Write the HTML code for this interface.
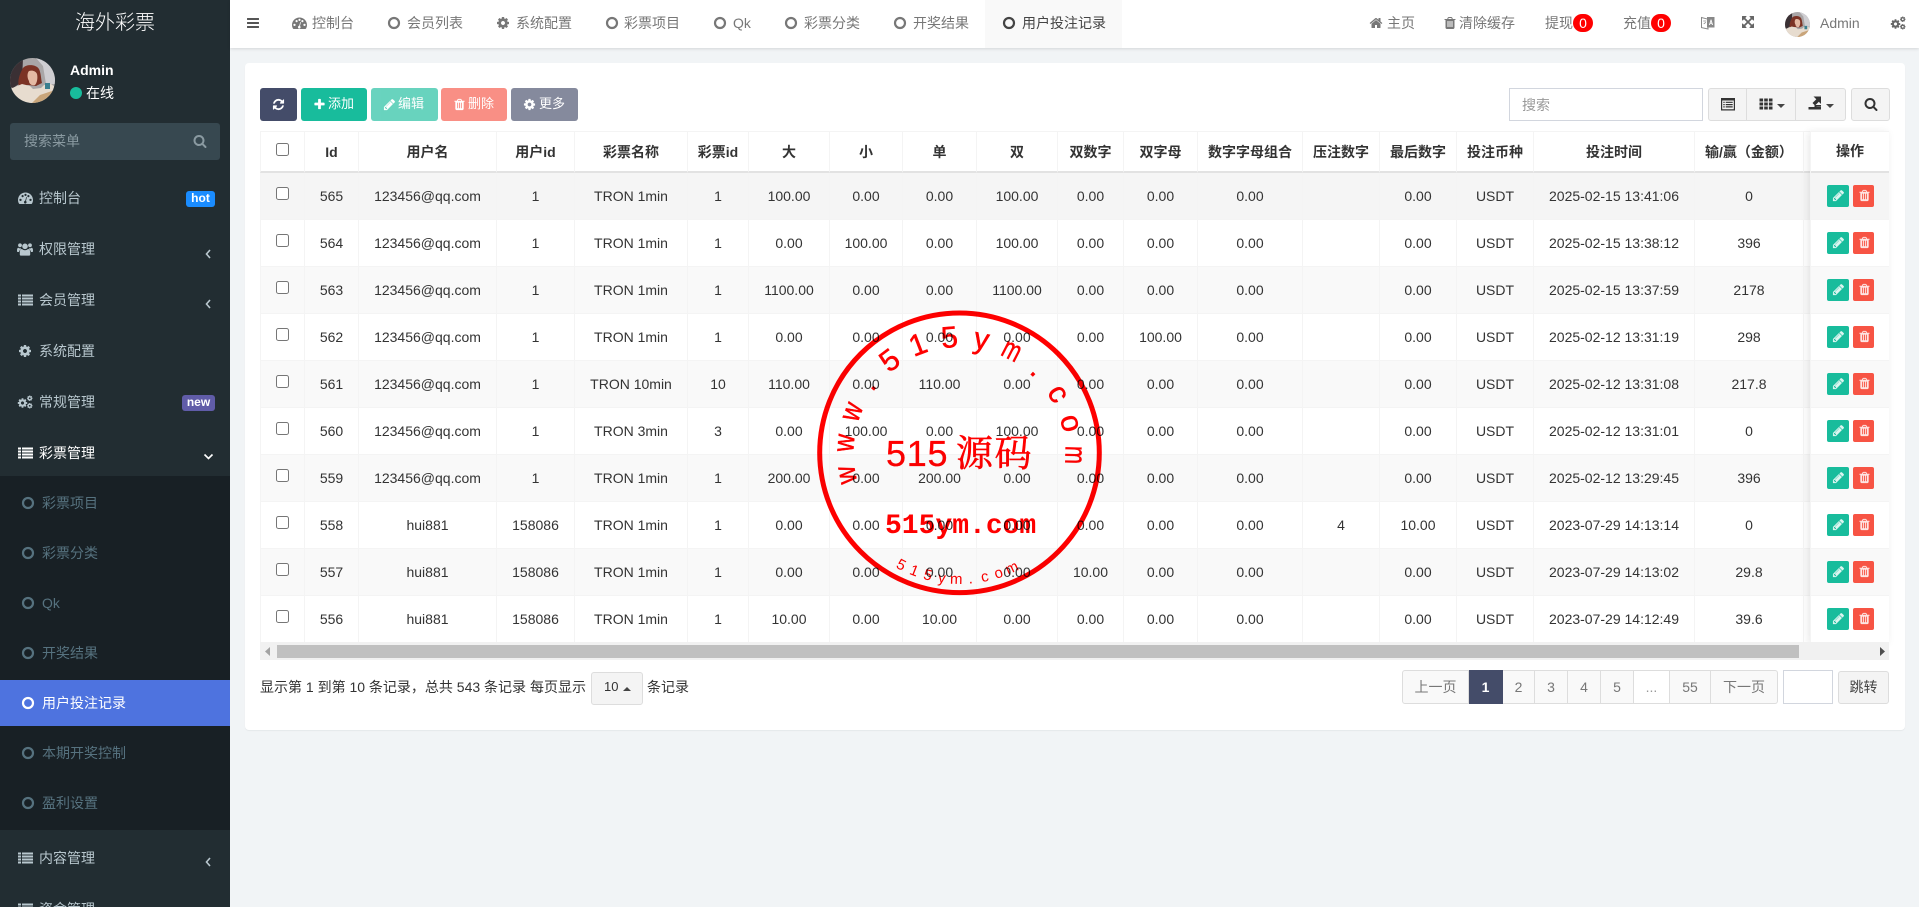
<!DOCTYPE html>
<html lang="zh-CN"><head><meta charset="utf-8"><title>用户投注记录</title>
<style>
*{box-sizing:border-box}
html,body{margin:0;padding:0;width:1919px;height:907px;overflow:hidden;background:#f1f4f6;font-family:"Liberation Sans","Noto Sans CJK SC",sans-serif;font-size:14px;color:#333}
.a{position:absolute}
.t{position:absolute;line-height:20px;white-space:nowrap}
svg.i{position:absolute;width:14px;height:14px;fill:currentColor;display:block}
svg.av{position:absolute;border-radius:50%;overflow:hidden}
#side{position:absolute;left:0;top:0;width:230px;height:907px;background:#222d32;overflow:hidden;color:#b8c7ce}
#sub{position:absolute;left:0;top:476px;width:230px;height:354px;background:#182025}
#act{position:absolute;left:0;top:680px;width:230px;height:46px;background:#4e73df}
.s{color:#56727f}
#top{position:absolute;left:230px;top:0;width:1689px;height:48px;background:#fff;box-shadow:0 1px 3px rgba(0,0,0,.12)}
#nav{position:absolute;left:0;top:0;width:1919px;height:48px;color:#777}
#panel{position:absolute;left:245px;top:63px;width:1660px;height:667px;background:#fff;border-radius:4px;box-shadow:0 1px 1px rgba(0,0,0,.05)}
.b{position:absolute;top:88px;height:33px;border-radius:3px;color:#fff;line-height:33px}
.b .t{font-size:13px}
.b svg.i{width:13px;height:13px}
table{position:absolute;left:260px;top:131px;width:1629px;table-layout:fixed;border-collapse:separate;border-spacing:0;font-size:14px;color:#333}
th,td{border-right:1px solid #f4f4f4;border-bottom:1px solid #f4f4f4;text-align:center;padding:0;white-space:nowrap;overflow:hidden}
th{height:42px;border-top:1px solid #f4f4f4;border-bottom:2px solid #e2e2e2;font-weight:700;background:#fff}
td{height:47px}
th:first-child,td:first-child{border-left:1px solid #f4f4f4}
tr.o td{background:#f9f9f9}
tr.h td{background:#f5f5f5}
input[type=checkbox]{margin:0;width:13px;height:13px;position:relative;top:-1px;left:0}
#fix{position:absolute;left:1810px;top:131px;width:79px;height:512px;background:#fff;box-shadow:-2px 1px 8px rgba(0,0,0,.09);border-left:1px solid #f4f4f4}
#fix .hd{height:42px;border-top:1px solid #f4f4f4;border-bottom:2px solid #e2e2e2;text-align:center;line-height:39px;font-weight:700}
#fix .r{position:relative;height:47px;border-bottom:1px solid #f4f4f4}
#fix .r.o{background:#f9f9f9}#fix .r.h{background:#f5f5f5}
.e,.d{position:absolute;top:12px;height:22px;border-radius:2px;color:#fff}
.e{left:16px;width:22px;background:#18bc9c}
.d{left:42px;width:21px;background:#f75444}
.e svg,.d svg{left:5px;top:4px;width:13px;height:13px;opacity:.85}
.p{position:absolute;top:670px;height:34px;border:1px solid #ddd;border-left:0;background:#f9f9f9;color:#777;text-align:center;line-height:32px}
.bd{position:absolute;top:14px;width:20px;height:18px;border-radius:9px;background:#f00;color:#fff;text-align:center;line-height:18px}
.g{position:absolute;top:88px;height:33px;background:#f4f4f4;border:1px solid #ddd;color:#333}
.car{position:absolute;width:0;height:0;border-left:4px solid transparent;border-right:4px solid transparent;border-top:4px solid #444}
#stamp{position:absolute;left:800px;top:293px;width:320px;height:320px;mix-blend-mode:multiply;overflow:visible}
</style></head><body>
<svg width="0" height="0" style="position:absolute"><defs>
<symbol id="bars" viewBox="0 0 1792 1792"><path d="M1664 1344v128q0 26-19 45t-45 19h-1408q-26 0-45-19t-19-45v-128q0-26 19-45t45-19h1408q26 0 45 19t19 45zm0-512v128q0 26-19 45t-45 19h-1408q-26 0-45-19t-19-45v-128q0-26 19-45t45-19h1408q26 0 45 19t19 45zm0-512v128q0 26-19 45t-45 19h-1408q-26 0-45-19t-19-45v-128q0-26 19-45t45-19h1408q26 0 45 19t19 45z"/></symbol>
<symbol id="plus" viewBox="0 0 1792 1792"><path d="M1600 736v192q0 40-28 68t-68 28h-416v416q0 40-28 68t-68 28h-192q-40 0-68-28t-28-68v-416h-416q-40 0-68-28t-28-68v-192q0-40 28-68t68-28h416v-416q0-40 28-68t68-28h192q40 0 68 28t28 68v416h416q40 0 68 28t28 68z"/></symbol>
<symbol id="search" viewBox="0 0 1792 1792"><path d="M1216 832q0-185-131.500-316.500t-316.500-131.500-316.500 131.500-131.500 316.500 131.500 316.500 316.500 131.500 316.500-131.500 131.500-316.500zm512 832q0 52-38 90t-90 38q-54 0-90-38l-343-342q-179 124-399 124-143 0-273.500-55.500t-225-150-150-225-55.500-273.500 55.500-273.500 150-225 225-150 273.500-55.500 273.500 55.500 225 150 150 225 55.500 273.500q0 220-124 399l343 343q37 37 37 90z"/></symbol>
<symbol id="ring" viewBox="0 0 14 14"><circle cx="7" cy="7" r="5" fill="none" stroke="currentColor" stroke-width="2.2"/></symbol>
<symbol id="trash" viewBox="0 0 1792 1792"><path d="M704 1376v-704q0-14-9-23t-23-9h-64q-14 0-23 9t-9 23v704q0 14 9 23t23 9h64q14 0 23-9t9-23zm256 0v-704q0-14-9-23t-23-9h-64q-14 0-23 9t-9 23v704q0 14 9 23t23 9h64q14 0 23-9t9-23zm256 0v-704q0-14-9-23t-23-9h-64q-14 0-23 9t-9 23v704q0 14 9 23t23 9h64q14 0 23-9t9-23zm-544-992h448l-48-117q-7-9-17-11h-317q-10 2-17 11zm928 32v64q0 14-9 23t-23 9h-96v948q0 83-47 143.500t-113 60.500h-832q-66 0-113-58.500t-47-141.500v-952h-96q-14 0-23-9t-9-23v-64q0-14 9-23t23-9h309l70-167q15-37 54-63t79-26h320q40 0 79 26t54 63l70 167h309q14 0 23 9t9 23z"/></symbol>
<symbol id="pencil" viewBox="0 0 1792 1792"><path d="M491 1536l91-91-235-235-91 91v107h128v128h107zm523-928q0-22-22-22-10 0-17 7l-542 542q-7 7-7 17 0 22 22 22 10 0 17-7l542-542q7-7 7-17zm-54-192l416 416-832 832h-416v-416zm683 96q0 53-37 90l-166 166-416-416 166-165q36-38 90-38 53 0 91 38l235 234q37 39 37 91z"/></symbol>
<symbol id="home" viewBox="0 0 1792 1792"><path d="M1472 992v480q0 26-19 45t-45 19h-384v-384h-256v384h-384q-26 0-45-19t-19-45v-480q0-1 .5-3t.5-3l575-474 575 474q1 2 1 6zm223-69l-62 74q-8 9-21 11h-3q-13 0-21-7l-692-577-692 577q-12 8-24 7-13-2-21-11l-62-74q-8-10-7-23.500t11-21.500l719-599q32-26 76-26t76 26l244 204v-195q0-14 9-23t23-9h192q14 0 23 9t9 23v408l219 182q10 8 11 21.500t-7 23.500z"/></symbol>
<symbol id="cog" viewBox="0 0 1792 1792"><path d="M1152 896q0-106-75-181t-181-75-181 75-75 181 75 181 181 75 181-75 75-181zm512-109v222q0 12-8 23t-20 13l-185 28q-19 54-39 91 35 50 107 138 10 12 10 25t-9 23q-27 37-99 108t-94 71q-12 0-26-9l-138-108q-44 23-91 38-16 136-29 186-7 28-36 28h-222q-14 0-24.500-8.500t-11.500-21.500l-28-184q-49-16-90-37l-141 107q-10 9-25 9-14 0-25-11-126-114-165-168-7-10-7-23 0-12 8-23 15-21 51-66.500t54-70.500q-27-50-41-99l-183-27q-13-2-21-12.500t-8-23.500v-222q0-12 8-23t19-13l186-28q14-46 39-92-40-57-107-138-10-12-10-24 0-10 9-23 26-36 98.500-107.500t94.500-71.500q13 0 26 10l138 107q44-23 91-38 16-136 29-186 7-28 36-28h222q14 0 24.500 8.500t11.500 21.500l28 184q49 16 90 37l142-107q9-9 24-9 13 0 25 10 129 119 165 170 7 8 7 22 0 12-8 23-15 21-51 66.500t-54 70.500q26 50 41 98l183 28q13 2 21 12.500t8 23.500z"/></symbol>
<symbol id="cogs" viewBox="0 0 16 14"><svg x="0" y="2.500" width="11" height="11" viewBox="0 0 1792 1792"><use href="#cog" width="1792" height="1792"/></svg><svg x="9.500" y="0" width="6.500" height="6.500" viewBox="0 0 1792 1792"><use href="#cog" width="1792" height="1792"/></svg><svg x="9.500" y="7.500" width="6.500" height="6.500" viewBox="0 0 1792 1792"><use href="#cog" width="1792" height="1792"/></svg></symbol>
<symbol id="refresh" viewBox="0 0 1792 1792"><path d="M1639 1056q0 5-1 7-64 268-268 434.500t-478 166.500q-146 0-282.500-55t-243.500-157l-129 129q-19 19-45 19t-45-19-19-45v-448q0-26 19-45t45-19h448q26 0 45 19t19 45-19 45l-137 137q71 66 161 102t187 36q134 0 250-65t186-179q11-17 53-117 8-23 30-23h192q13 0 22.500 9.500t9.500 22.500zm25-800v448q0 26-19 45t-45 19h-448q-26 0-45-19t-19-45 19-45l138-138q-148-137-349-137-134 0-250 65t-186 179q-11 17-53 117-8 23-30 23h-199q-13 0-22.500-9.500t-9.500-22.500v-7q65-268 270-434.500t480-166.500q146 0 284 55.500t245 156.500l130-129q19-19 45-19t45 19 19 45z"/></symbol>
<symbol id="list" viewBox="0 0 15 14"><path d="M0 2h3v2H0zM4 2h11v2H4zM0 5h3v2H0zM4 5h11v2H4zM0 8h3v2H0zM4 8h11v2H4zM0 11h3v2H0zM4 11h11v2H4z" transform="translate(0 -.5)"/></symbol>
<symbol id="dash" viewBox="0 0 15 14"><path fill-rule="evenodd" d="M7.500 1.500C3.400 1.500 0 4.800 0 9c0 1.400.4 2.600 1 3.600.2.300.4.400.7.400h11.600c.3 0 .5-.1.700-.4.600-1 1-2.200 1-3.600 0-4.200-3.400-7.500-7.500-7.500zM2.500 7.700a1.100 1.100 0 1 1 0 2.300 1.100 1.100 0 0 1 0-2.300zM4.600 4a1.100 1.100 0 1 1 0 2.200 1.100 1.100 0 0 1 0-2.200zM7.500 2.800a1.100 1.100 0 1 1 0 2.200 1.100 1.100 0 0 1 0-2.200zM10.400 4a1.100 1.100 0 1 1 0 2.200 1.100 1.100 0 0 1 0-2.200zM12.500 7.700a1.100 1.100 0 1 1 0 2.300 1.100 1.100 0 0 1 0-2.300zM8.300 5.900l.6.300-.9 3.800c.4.300.6.700.6 1.200 0 .8-.7 1.400-1.400 1.400S6 12 6 11.200c0-.7.500-1.300 1.200-1.400z"/></symbol>
<symbol id="users" viewBox="0 0 16 14"><circle cx="8" cy="4.300" r="2.800"/><circle cx="3" cy="3.300" r="1.900"/><circle cx="13" cy="3.300" r="1.900"/><path d="M3.800 13.600c-.6 0-1-.4-1-1V10c0-1.800 1-3 2.300-3 .5.600 1.500 1.300 2.900 1.300S10.400 7.600 10.900 7c1.300 0 2.300 1.200 2.300 3v2.600c0 .6-.4 1-1 1zM0 8.200C0 6.600.6 5.700 1.500 5.700c.4.400 1 .7 1.700.7.300 0 .5 0 .8-.1-.1.500 0 .8.100.9C3 7.600 2.100 8.700 2 10H.7C.3 10 0 9.700 0 9.300zM16 8.200c0-1.600-.6-2.500-1.500-2.500-.4.400-1 .7-1.700.7-.3 0-.5 0-.8-.1.100.5 0 .8-.1.900 1.100.4 2 1.500 2.100 2.800h1.300c.4 0 .7-.3.7-.7z"/></symbol>
<symbol id="arrows" viewBox="0 0 1792 1792"><path d="M1283 413l-355 355 355 355 144-144q29-31 70-14 39 17 39 59v448q0 26-19 45t-45 19h-448q-42 0-59-40-17-39 14-69l144-144-355-355-355 355 144 144q31 30 14 69-17 40-59 40h-448q-26 0-45-19t-19-45v-448q0-42 40-59 39-17 69 14l144 144 355-355-355-355-144 144q-19 19-45 19-12 0-24-5-40-17-40-59v-448q0-26 19-45t45-19h448q42 0 59 40 17 39-14 69l-144 144 355 355 355-355-144-144q-31-30-14-69 17-40 59-40h448q26 0 45 19t19 45v448q0 42-39 59-13 5-25 5-26 0-45-19z"/></symbol>
<symbol id="lang" viewBox="0 0 14 14"><path d="M.5 1.500 7 3.200V13L.5 11.600z" fill="none" stroke="currentColor" stroke-width="1"/><path d="M6 1h7.500v10.500H6z" fill="currentColor"/><path d="M8 9l1.700-5.500h.7L12 9h-1l-.4-1.300H9.300L9 9zM9.600 6.800h.8l-.4-1.500z" fill="#fff"/><path d="M2.200 4.600h3v.8h-3zM2.500 7.500 4.700 6l.4.600L2.900 8.200z" fill="currentColor"/></symbol>
<symbol id="listalt" viewBox="0 0 14 14"><path fill-rule="evenodd" d="M0 1h14v12.500H0zM1.200 3.500v8.800h11.600V3.500z"/><path d="M2.300 4.700h1.400v1.200H2.300zM4.700 4.700h7v1.200h-7zM2.300 7h1.400v1.200H2.300zM4.700 7h7v1.200h-7zM2.300 9.300h1.400v1.200H2.300zM4.700 9.300h7v1.200h-7z"/></symbol>
<symbol id="th" viewBox="0 0 14 14"><path d="M.5 1.500h3.600v3H.5zM5.200 1.500h3.600v3H5.200zM9.900 1.500h3.600v3H9.900zM.5 5.500h3.600v3H.5zM5.200 5.500h3.600v3H5.200zM9.900 5.500h3.600v3H9.900zM.5 9.500h3.600v3H.5zM5.200 9.500h3.600v3H5.200zM9.900 9.500h3.600v3H9.900z"/></symbol>
<symbol id="export" viewBox="0 0 14 14"><path d="M.5 9h12.500v1H8.500v.2H13V13.500H.5V11h6V9z"/><path d="M5.500.5H13V8L10.800 5.800 7 9.500 4.500 7 8.300 3.200z"/></symbol>
<symbol id="ava" viewBox="0 0 45 45"><rect width="45" height="45" fill="#a9a6a7"/><path d="M26 0h19v26H36L33 8z" fill="#cfced2"/><path d="M0 0h13l-1 24-9 6-3-1z" fill="#3a3034"/><path d="M13 10c3-4 13-4 16 1 2 4 2 10 3 14l-6 3-8-1-9 2c-2-6 1-14 4-19z" fill="#7c3325"/><path d="M19 13c3-1 7 0 8 3 1 4 0 9-2 11-3 1-6-1-6-4-2-3-2-8 0-10z" fill="#e4b9a3"/><path d="M0 31l12-5 8 2 3 3 8-1 3-3 7-1 4 3v16H0z" fill="#e7dccf"/><path d="M22 45l8-8 15-5v13z" fill="#c9a57a"/><path d="M35 25h5v6h-5z" fill="#3a7f8f"/></symbol>
</defs></svg>

<div id="side">
<div id="sub"></div><div id="act"></div>
<div class="t" style="left:0;width:230px;text-align:center;top:9px;font-size:20px;line-height:28px;color:#fff;font-weight:300">海外彩票</div>
<svg class="av" style="left:10px;top:58px;width:45px;height:45px"><use href="#ava"/></svg>
<div class="t" style="left:70px;top:60px;color:#fff;font-weight:700">Admin</div>
<div class="a" style="left:70px;top:87px;width:12px;height:12px;border-radius:50%;background:#18bc9c"></div>
<div class="t" style="left:86px;top:83px;color:#fff">在线</div>
<div class="a" style="left:10px;top:123px;width:210px;height:37px;border-radius:3px;background:#374850"></div>
<div class="t" style="left:24px;top:131px;color:#8a9aa1">搜索菜单</div>
<svg class="i" style="left:193px;top:134px;color:#8a9aa1"><use href="#search"/></svg>

<svg class="i" style="left:18px;top:191px;width:15px"><use href="#dash"/></svg><div class="t" style="left:39px;top:188px">控制台</div>
<div class="a" style="left:186px;top:191px;width:29px;height:16px;border-radius:3px;background:#1a8cff;color:#fff;font-size:12px;font-weight:700;text-align:center;line-height:15px">hot</div>
<svg class="i" style="left:17px;top:242px;width:16px"><use href="#users"/></svg><div class="t" style="left:39px;top:239px">权限管理</div>
<svg class="i" style="left:18px;top:293px;width:15px"><use href="#list"/></svg><div class="t" style="left:39px;top:290px">会员管理</div>
<svg class="i" style="left:18px;top:344px"><use href="#cog"/></svg><div class="t" style="left:39px;top:341px">系统配置</div>
<svg class="i" style="left:17px;top:395px;width:16px"><use href="#cogs"/></svg><div class="t" style="left:39px;top:392px">常规管理</div>
<div class="a" style="left:182px;top:395px;width:33px;height:16px;border-radius:3px;background:#605ca8;color:#fff;font-size:12px;font-weight:700;text-align:center;line-height:15px">new</div>
<svg class="i" style="left:18px;top:446px;width:15px;color:#fff"><use href="#list"/></svg><div class="t" style="left:39px;top:443px;color:#fff">彩票管理</div>

<svg class="i s" style="left:21px;top:496px"><use href="#ring"/></svg><div class="t s" style="left:42px;top:493px">彩票项目</div>
<svg class="i s" style="left:21px;top:546px"><use href="#ring"/></svg><div class="t s" style="left:42px;top:543px">彩票分类</div>
<svg class="i s" style="left:21px;top:596px"><use href="#ring"/></svg><div class="t s" style="left:42px;top:593px">Qk</div>
<svg class="i s" style="left:21px;top:646px"><use href="#ring"/></svg><div class="t s" style="left:42px;top:643px">开奖结果</div>
<svg class="i" style="left:21px;top:696px;color:#fff"><use href="#ring"/></svg><div class="t" style="left:42px;top:693px;color:#fff">用户投注记录</div>
<svg class="i s" style="left:21px;top:746px"><use href="#ring"/></svg><div class="t s" style="left:42px;top:743px">本期开奖控制</div>
<svg class="i s" style="left:21px;top:796px"><use href="#ring"/></svg><div class="t s" style="left:42px;top:793px">盈利设置</div>

<svg class="i" style="left:18px;top:851px;width:15px"><use href="#list"/></svg><div class="t" style="left:39px;top:848px">内容管理</div>
<svg class="i" style="left:18px;top:902px;width:15px"><use href="#list"/></svg><div class="t" style="left:39px;top:899px">资金管理</div>

<svg class="a" style="left:204px;top:248px;width:8px;height:12px" viewBox="0 0 8 12"><path d="M6 2 2.500 6 6 10" fill="none" stroke="#b8c7ce" stroke-width="1.600"/></svg>
<svg class="a" style="left:204px;top:298px;width:8px;height:12px" viewBox="0 0 8 12"><path d="M6 2 2.500 6 6 10" fill="none" stroke="#b8c7ce" stroke-width="1.600"/></svg>
<svg class="a" style="left:204px;top:856px;width:8px;height:12px" viewBox="0 0 8 12"><path d="M6 2 2.500 6 6 10" fill="none" stroke="#b8c7ce" stroke-width="1.600"/></svg>
<svg class="a" style="left:203px;top:452px;width:11px;height:9px" viewBox="0 0 11 9"><path d="M1.500 2.500 5.500 6.500 9.500 2.500" fill="none" stroke="#fff" stroke-width="1.600"/></svg>
</div>

<div id="top"></div>
<div id="nav">
<svg class="i" style="left:246px;top:16px;color:#555"><use href="#bars"/></svg>
<svg class="i" style="left:292px;top:16px;width:15px"><use href="#dash"/></svg><div class="t" style="left:312px;top:13px">控制台</div>
<svg class="i" style="left:387px;top:16px"><use href="#ring"/></svg><div class="t" style="left:407px;top:13px">会员列表</div>
<svg class="i" style="left:496px;top:16px"><use href="#cog"/></svg><div class="t" style="left:516px;top:13px">系统配置</div>
<svg class="i" style="left:605px;top:16px"><use href="#ring"/></svg><div class="t" style="left:624px;top:13px">彩票项目</div>
<svg class="i" style="left:713px;top:16px"><use href="#ring"/></svg><div class="t" style="left:733px;top:13px">Qk</div>
<svg class="i" style="left:784px;top:16px"><use href="#ring"/></svg><div class="t" style="left:804px;top:13px">彩票分类</div>
<svg class="i" style="left:893px;top:16px"><use href="#ring"/></svg><div class="t" style="left:913px;top:13px">开奖结果</div>
<div class="a" style="left:985px;top:0;width:137px;height:48px;background:#f9f9f9"></div>
<svg class="i" style="left:1002px;top:16px;color:#444"><use href="#ring"/></svg><div class="t" style="left:1022px;top:13px;color:#444">用户投注记录</div>
<svg class="i" style="left:1369px;top:16px"><use href="#home"/></svg><div class="t" style="left:1387px;top:13px">主页</div>
<svg class="i" style="left:1443px;top:16px"><use href="#trash"/></svg><div class="t" style="left:1459px;top:13px">清除缓存</div>
<div class="t" style="left:1545px;top:13px">提现</div><div class="bd" style="left:1573px">0</div>
<div class="t" style="left:1623px;top:13px">充值</div><div class="bd" style="left:1651px">0</div>
<svg class="i" style="left:1701px;top:16px;color:#888"><use href="#lang"/></svg>
<svg class="i" style="left:1742px;top:16px;color:#666"><use href="#arrows"/></svg>
<svg class="av" style="left:1785px;top:12px;width:25px;height:25px"><use href="#ava"/></svg>
<div class="t" style="left:1820px;top:13px">Admin</div>
<svg class="i" style="left:1890px;top:16px;width:16px;color:#666"><use href="#cogs"/></svg>
</div>

<div id="panel"></div>
<div class="b" style="left:260px;width:37px;background:#444c69"><svg class="i" style="left:12px;top:10px"><use href="#refresh"/></svg></div>
<div class="b" style="left:301px;width:66px;background:#18bc9c"><svg class="i" style="left:12px;top:10px"><use href="#plus"/></svg><span class="t" style="left:27px;top:6px">添加</span></div>
<div class="b" style="left:371px;width:67px;background:#18bc9c;opacity:.65"><svg class="i" style="left:12px;top:10px"><use href="#pencil"/></svg><span class="t" style="left:27px;top:6px">编辑</span></div>
<div class="b" style="left:441px;width:66px;background:#f75444;opacity:.65"><svg class="i" style="left:12px;top:10px"><use href="#trash"/></svg><span class="t" style="left:27px;top:6px">删除</span></div>
<div class="b" style="left:511px;width:67px;background:#444c69;opacity:.65"><svg class="i" style="left:12px;top:10px"><use href="#cog"/></svg><span class="t" style="left:28px;top:6px">更多</span></div>

<div class="a" style="left:1509px;top:88px;width:194px;height:33px;border:1px solid #d2d6de;background:#fff"></div>
<div class="t" style="left:1522px;top:95px;color:#999">搜索</div>
<div class="g" style="left:1708px;width:39px;border-radius:3px 0 0 3px"><svg class="i" style="left:12px;top:8px"><use href="#listalt"/></svg></div>
<div class="g" style="left:1746px;width:50px"><svg class="i" style="left:12px;top:8px"><use href="#th"/></svg><div class="car" style="left:30px;top:15px"></div></div>
<div class="g" style="left:1795px;width:51px;border-radius:0 3px 3px 0"><svg class="i" style="left:12px;top:7px"><use href="#export"/></svg><div class="car" style="left:30px;top:15px"></div></div>
<div class="g" style="left:1851px;width:39px;border-radius:3px"><svg class="i" style="left:12px;top:8px"><use href="#search"/></svg></div>

<table><colgroup><col style="width:45px"><col style="width:54px"><col style="width:138px"><col style="width:78px"><col style="width:113px"><col style="width:61px"><col style="width:81px"><col style="width:73px"><col style="width:74px"><col style="width:81px"><col style="width:66px"><col style="width:74px"><col style="width:105px"><col style="width:77px"><col style="width:77px"><col style="width:77px"><col style="width:161px"><col style="width:109px"><col style="width:85px"></colgroup>
<thead><tr><th><input type="checkbox"></th><th>Id</th><th>用户名</th><th>用户id</th><th>彩票名称</th><th>彩票id</th><th>大</th><th>小</th><th>单</th><th>双</th><th>双数字</th><th>双字母</th><th>数字字母组合</th><th>压注数字</th><th>最后数字</th><th>投注币种</th><th>投注时间</th><th>输/赢（金额）</th><th></th></tr></thead>
<tbody>
<tr class="h"><td><input type="checkbox"></td><td>565</td><td>123456@qq.com</td><td>1</td><td>TRON 1min</td><td>1</td><td>100.00</td><td>0.00</td><td>0.00</td><td>100.00</td><td>0.00</td><td>0.00</td><td>0.00</td><td></td><td>0.00</td><td>USDT</td><td>2025-02-15 13:41:06</td><td>0</td><td></td></tr>
<tr><td><input type="checkbox"></td><td>564</td><td>123456@qq.com</td><td>1</td><td>TRON 1min</td><td>1</td><td>0.00</td><td>100.00</td><td>0.00</td><td>100.00</td><td>0.00</td><td>0.00</td><td>0.00</td><td></td><td>0.00</td><td>USDT</td><td>2025-02-15 13:38:12</td><td>396</td><td></td></tr>
<tr class="o"><td><input type="checkbox"></td><td>563</td><td>123456@qq.com</td><td>1</td><td>TRON 1min</td><td>1</td><td>1100.00</td><td>0.00</td><td>0.00</td><td>1100.00</td><td>0.00</td><td>0.00</td><td>0.00</td><td></td><td>0.00</td><td>USDT</td><td>2025-02-15 13:37:59</td><td>2178</td><td></td></tr>
<tr><td><input type="checkbox"></td><td>562</td><td>123456@qq.com</td><td>1</td><td>TRON 1min</td><td>1</td><td>0.00</td><td>0.00</td><td>0.00</td><td>0.00</td><td>0.00</td><td>100.00</td><td>0.00</td><td></td><td>0.00</td><td>USDT</td><td>2025-02-12 13:31:19</td><td>298</td><td></td></tr>
<tr class="o"><td><input type="checkbox"></td><td>561</td><td>123456@qq.com</td><td>1</td><td>TRON 10min</td><td>10</td><td>110.00</td><td>0.00</td><td>110.00</td><td>0.00</td><td>0.00</td><td>0.00</td><td>0.00</td><td></td><td>0.00</td><td>USDT</td><td>2025-02-12 13:31:08</td><td>217.8</td><td></td></tr>
<tr><td><input type="checkbox"></td><td>560</td><td>123456@qq.com</td><td>1</td><td>TRON 3min</td><td>3</td><td>0.00</td><td>100.00</td><td>0.00</td><td>100.00</td><td>0.00</td><td>0.00</td><td>0.00</td><td></td><td>0.00</td><td>USDT</td><td>2025-02-12 13:31:01</td><td>0</td><td></td></tr>
<tr class="o"><td><input type="checkbox"></td><td>559</td><td>123456@qq.com</td><td>1</td><td>TRON 1min</td><td>1</td><td>200.00</td><td>0.00</td><td>200.00</td><td>0.00</td><td>0.00</td><td>0.00</td><td>0.00</td><td></td><td>0.00</td><td>USDT</td><td>2025-02-12 13:29:45</td><td>396</td><td></td></tr>
<tr><td><input type="checkbox"></td><td>558</td><td>hui881</td><td>158086</td><td>TRON 1min</td><td>1</td><td>0.00</td><td>0.00</td><td>0.00</td><td>0.00</td><td>0.00</td><td>0.00</td><td>0.00</td><td>4</td><td>10.00</td><td>USDT</td><td>2023-07-29 14:13:14</td><td>0</td><td></td></tr>
<tr class="o"><td><input type="checkbox"></td><td>557</td><td>hui881</td><td>158086</td><td>TRON 1min</td><td>1</td><td>0.00</td><td>0.00</td><td>0.00</td><td>0.00</td><td>10.00</td><td>0.00</td><td>0.00</td><td></td><td>0.00</td><td>USDT</td><td>2023-07-29 14:13:02</td><td>29.8</td><td></td></tr>
<tr><td><input type="checkbox"></td><td>556</td><td>hui881</td><td>158086</td><td>TRON 1min</td><td>1</td><td>10.00</td><td>0.00</td><td>10.00</td><td>0.00</td><td>0.00</td><td>0.00</td><td>0.00</td><td></td><td>0.00</td><td>USDT</td><td>2023-07-29 14:12:49</td><td>39.6</td><td></td></tr>
</tbody></table>

<div id="fix"><div class="hd">操作</div>
<div class="r h"><div class="e"><svg class="i"><use href="#pencil"/></svg></div><div class="d"><svg class="i"><use href="#trash"/></svg></div></div>
<div class="r"><div class="e"><svg class="i"><use href="#pencil"/></svg></div><div class="d"><svg class="i"><use href="#trash"/></svg></div></div>
<div class="r o"><div class="e"><svg class="i"><use href="#pencil"/></svg></div><div class="d"><svg class="i"><use href="#trash"/></svg></div></div>
<div class="r"><div class="e"><svg class="i"><use href="#pencil"/></svg></div><div class="d"><svg class="i"><use href="#trash"/></svg></div></div>
<div class="r o"><div class="e"><svg class="i"><use href="#pencil"/></svg></div><div class="d"><svg class="i"><use href="#trash"/></svg></div></div>
<div class="r"><div class="e"><svg class="i"><use href="#pencil"/></svg></div><div class="d"><svg class="i"><use href="#trash"/></svg></div></div>
<div class="r o"><div class="e"><svg class="i"><use href="#pencil"/></svg></div><div class="d"><svg class="i"><use href="#trash"/></svg></div></div>
<div class="r"><div class="e"><svg class="i"><use href="#pencil"/></svg></div><div class="d"><svg class="i"><use href="#trash"/></svg></div></div>
<div class="r o"><div class="e"><svg class="i"><use href="#pencil"/></svg></div><div class="d"><svg class="i"><use href="#trash"/></svg></div></div>
<div class="r"><div class="e"><svg class="i"><use href="#pencil"/></svg></div><div class="d"><svg class="i"><use href="#trash"/></svg></div></div>
</div>

<div class="a" style="left:260px;top:642px;width:1629px;height:18px;background:#f1f1f1"></div>
<div class="a" style="left:277px;top:645px;width:1522px;height:13px;background:#c0c0c0"></div>
<svg class="a" style="left:265px;top:647px;width:6px;height:9px" viewBox="0 0 6 9"><path d="M5 0v9L0 4.500z" fill="#a3a3a3"/></svg>
<svg class="a" style="left:1879px;top:647px;width:6px;height:9px" viewBox="0 0 6 9"><path d="M1 0v9l5-4.500z" fill="#505050"/></svg>

<div class="t" style="left:260px;top:677px">显示第 1 到第 10 条记录，总共 543 条记录 每页显示</div>
<div class="a" style="left:591px;top:672px;width:52px;height:33px;background:#f4f4f4;border:1px solid #ddd;border-radius:3px"></div>
<div class="t" style="left:604px;top:677px;font-size:13px">10</div>
<div class="car" style="left:623px;top:687px;border-top:0;border-bottom:4px solid #444"></div>
<div class="t" style="left:647px;top:677px">条记录</div>

<div class="p" style="left:1402px;width:67px;border-left:1px solid #ddd;border-radius:3px 0 0 3px">上一页</div>
<div class="p" style="left:1469px;width:34px;background:#444c69;border-color:#444c69;color:#fff;font-weight:700">1</div>
<div class="p" style="left:1503px;width:32px">2</div>
<div class="p" style="left:1535px;width:33px">3</div>
<div class="p" style="left:1568px;width:33px">4</div>
<div class="p" style="left:1601px;width:33px">5</div>
<div class="p" style="left:1634px;width:36px;background:#fff;color:#999">...</div>
<div class="p" style="left:1670px;width:41px">55</div>
<div class="p" style="left:1711px;width:67px;border-radius:0 3px 3px 0">下一页</div>
<div class="a" style="left:1783px;top:670px;width:50px;height:34px;border:1px solid #d2d6de;background:#fff"></div>
<div class="a" style="left:1838px;top:671px;width:51px;height:33px;background:#f4f4f4;border:1px solid #ddd;border-radius:3px;text-align:center;line-height:31px;color:#444">跳转</div>

<svg id="stamp" viewBox="0 0 320 320" font-family="'Liberation Sans','Noto Sans CJK SC',sans-serif" fill="#f00">
<circle cx="159.500" cy="159.800" r="139.800" fill="none" stroke="#f00" stroke-width="5"/>
<g transform="translate(159.500 160)" font-size="30" text-anchor="middle" stroke="#f00" stroke-width=".5">
<text transform="rotate(-101) translate(0 -106) scale(.8 1)">w</text>
<text transform="rotate(-85) translate(0 -106) scale(.8 1)">w</text>
<text transform="rotate(-69) translate(0 -106) scale(.8 1)">w</text>
<text transform="rotate(-53) translate(0 -106)">.</text>
<text transform="rotate(-37) translate(0 -106)">5</text>
<text transform="rotate(-21) translate(0 -106)">1</text>
<text transform="rotate(-5) translate(0 -106)">5</text>
<text transform="rotate(11) translate(0 -106)">y</text>
<text transform="rotate(27) translate(0 -106) scale(.72 1)">m</text>
<text transform="rotate(43) translate(0 -106)">.</text>
<text transform="rotate(59) translate(0 -106)">c</text>
<text transform="rotate(75) translate(0 -106)">o</text>
<text transform="rotate(91) translate(0 -106) scale(.72 1)">m</text>
</g>
<text x="86" y="173" font-size="36" letter-spacing=".7" stroke="#f00" stroke-width=".3">515</text>
<text x="156" y="173" font-size="37" font-family="'Noto Serif CJK SC',serif" letter-spacing="1.500" stroke="#f00" stroke-width=".6">源码</text>
<text x="85" y="240" font-size="28" font-weight="700" font-family="'Liberation Mono',monospace">515ym.com</text>
<g transform="translate(159.500 160)" font-size="15" text-anchor="middle">
<text transform="rotate(27.500) translate(0 131)">5</text>
<text transform="rotate(21) translate(0 131)">1</text>
<text transform="rotate(14.500) translate(0 131)">5</text>
<text transform="rotate(8) translate(0 131)">y</text>
<text transform="rotate(1.500) translate(0 131)">m</text>
<text transform="rotate(-5) translate(0 131)">.</text>
<text transform="rotate(-11.500) translate(0 131)">c</text>
<text transform="rotate(-18) translate(0 131)">o</text>
<text transform="rotate(-24.500) translate(0 131)">m</text>
</g>
</svg>
</body></html>
